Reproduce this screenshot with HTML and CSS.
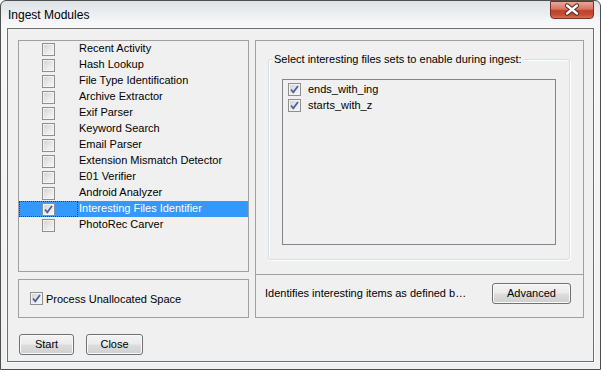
FILE: index.html
```html
<!DOCTYPE html>
<html lang="en">
<head>
    <meta charset="UTF-8">
    <title>Ingest Modules</title>
    <link rel="stylesheet" href="styles.css">
</head>
<body>
    <div class="window">
        <div class="titlebar">
            <span class="title">Ingest Modules</span>
            <span class="close-btn">
                <svg width="44" height="18" viewBox="0 0 44 18">
                    <path d="M17 4.5 L27 12.5 M27 4.5 L17 12.5" stroke="#4b2620" stroke-width="4.2" stroke-linecap="round" fill="none"/>
                    <path d="M17 4.5 L27 12.5 M27 4.5 L17 12.5" stroke="#ffffff" stroke-width="2.4" stroke-linecap="round" fill="none"/>
                </svg>
            </span>
        </div>

        <div class="client">
            <div class="panels">
                <!-- Lista de módulos -->
                <div class="left-col">
                    <div class="module-list">
                        <div class="row"><span class="cell-check"><span class="cb"></span></span><span class="cell-name">Recent Activity</span></div>
                        <div class="row"><span class="cell-check"><span class="cb"></span></span><span class="cell-name">Hash Lookup</span></div>
                        <div class="row"><span class="cell-check"><span class="cb"></span></span><span class="cell-name">File Type Identification</span></div>
                        <div class="row"><span class="cell-check"><span class="cb"></span></span><span class="cell-name">Archive Extractor</span></div>
                        <div class="row"><span class="cell-check"><span class="cb"></span></span><span class="cell-name">Exif Parser</span></div>
                        <div class="row"><span class="cell-check"><span class="cb"></span></span><span class="cell-name">Keyword Search</span></div>
                        <div class="row"><span class="cell-check"><span class="cb"></span></span><span class="cell-name">Email Parser</span></div>
                        <div class="row"><span class="cell-check"><span class="cb"></span></span><span class="cell-name">Extension Mismatch Detector</span></div>
                        <div class="row"><span class="cell-check"><span class="cb"></span></span><span class="cell-name">E01 Verifier</span></div>
                        <div class="row"><span class="cell-check"><span class="cb"></span></span><span class="cell-name">Android Analyzer</span></div>
                        <div class="row selected">
                            <span class="cell-check"><span class="cb">
                                <svg width="11" height="11" viewBox="0 0 11 11"><path d="M2 5.5 L4.3 8.3 L9 2" stroke="#4a5f97" stroke-width="1.7" fill="none"/></svg>
                            </span></span>
                            <span class="cell-name">Interesting Files Identifier</span>
                        </div>
                        <div class="row"><span class="cell-check"><span class="cb"></span></span><span class="cell-name">PhotoRec Carver</span></div>
                    </div>

                    <div class="unalloc">
                        <span class="cb">
                            <svg width="11" height="11" viewBox="0 0 11 11"><path d="M2 5.5 L4.3 8.3 L9 2" stroke="#4a5f97" stroke-width="1.7" fill="none"/></svg>
                        </span>
                        <span>Process Unallocated Space</span>
                    </div>
                </div>

                <!-- Ajustes del módulo -->
                <div class="settings">
                    <div class="settings-top">
                        <div class="group">
                            <span class="group-title">Select interesting files sets to enable during ingest:</span>
                            <div class="set-list">
                                <div class="set-row">
                                    <span class="cb"><svg width="11" height="11" viewBox="0 0 11 11"><path d="M2 5.5 L4.3 8.3 L9 2" stroke="#4a5f97" stroke-width="1.7" fill="none"/></svg></span>
                                    <span>ends_with_ing</span>
                                </div>
                                <div class="set-row">
                                    <span class="cb"><svg width="11" height="11" viewBox="0 0 11 11"><path d="M2 5.5 L4.3 8.3 L9 2" stroke="#4a5f97" stroke-width="1.7" fill="none"/></svg></span>
                                    <span>starts_with_z</span>
                                </div>
                            </div>
                        </div>
                    </div>
                    <div class="settings-bottom">
                        <span class="desc">Identifies interesting items as defined b…</span>
                        <button class="btn btn-advanced">Advanced</button>
                    </div>
                </div>
            </div>

            <div class="buttons">
                <button class="btn btn-start">Start</button>
                <button class="btn btn-close">Close</button>
            </div>
        </div>
    </div>
</body>
</html>
```

FILE: styles.css
```css
body {
    margin: 0;
    background: #ffffff;
    font-family: "Liberation Sans", Arial, sans-serif;
    font-size: 11px;
    color: #000;
}
.window {
    width: 601px;
    height: 370px;
    box-sizing: border-box;
    border: 1px solid #4f4f4f;
    border-radius: 6px 6px 0 0;
    padding: 0 6px 7px 6px;
    background: linear-gradient(to bottom, #dde2e6 0, #f6f7f9 22px, #eef0f2 100%);
    display: flex;
    flex-direction: column;
}
.titlebar {
    height: 27px;
    display: flex;
    justify-content: space-between;
    align-items: flex-start;
}
.title {
    font-size: 12px;
    margin: 7px 0 0 1px;
    line-height: 14px;
}
.close-btn {
    width: 44px;
    height: 18px;
    box-sizing: border-box;
    border: 1px solid #7a2f24;
    border-radius: 0 0 4px 4px;
    background: linear-gradient(to bottom, #eaa797 0%, #d87360 45%, #c1432c 52%, #c54b34 80%, #d97158 100%);
    display: flex;
    align-items: center;
    justify-content: center;
    overflow: hidden;
}
.close-btn svg {
    display: block;
    flex: none;
}
.client {
    flex: 1;
    border: 1px solid #6e6e6e;
    box-shadow: 0 0 0 1px #fbfbfb;
    background: #f0f0f0;
    padding: 11px 9px 0 10px;
}
.panels {
    display: grid;
    grid-template-columns: 231px 329px;
    column-gap: 6px;
    height: 278px;
}
.left-col {
    display: flex;
    flex-direction: column;
    gap: 7px;
}
.module-list {
    height: 232px;
    box-sizing: border-box;
    border: 1px solid #a0a0a0;
}
.row {
    display: flex;
    height: 16px;
    line-height: 15px;
}
.cell-check {
    width: 59px;
    box-sizing: border-box;
    display: flex;
    align-items: center;
    justify-content: center;
    border: 1px solid transparent;
}
.cell-name {
    flex: 1;
    padding-left: 1px;
    white-space: nowrap;
}
.row.selected .cell-check {
    background: #3399ff;
    border: 1px dotted #1d3f66;
}
.row.selected .cell-name {
    background: #3399ff;
    color: #fff;
}
.cb {
    width: 13px;
    height: 13px;
    box-sizing: border-box;
    flex: none;
    border: 1px solid #8e8f8f;
    background: linear-gradient(135deg, #cdd0d4 0%, #e6e7e8 50%, #f8f8f8 100%);
    box-shadow: inset 0 0 0 1px #f3f3f3;
    display: flex;
    align-items: center;
    justify-content: center;
}
.cb svg {
    display: block;
}
.unalloc {
    height: 39px;
    box-sizing: border-box;
    border: 1px solid #a0a0a0;
    display: flex;
    align-items: center;
    padding-left: 11px;
    gap: 3px;
}
.settings {
    border: 1px solid #a0a0a0;
    display: flex;
    flex-direction: column;
}
.settings-top {
    height: 234px;
    box-sizing: border-box;
    border-bottom: 1px solid #a0a0a0;
    display: flex;
    flex-direction: column;
    padding: 18px 13px 14px 12px;
}
.group {
    flex: 1;
    border: 1px solid #d5dfe5;
    border-radius: 3px;
    box-shadow: inset 1px 1px 0 #ffffff, 1px 1px 0 #ffffff;
    display: flex;
    flex-direction: column;
    align-items: flex-start;
    padding: 0 13px 14px 13px;
}
.group-title {
    line-height: 14px;
    margin: -8px 0 0 -10px;
    padding: 0 2px;
    background: #f0f0f0;
}
.set-list {
    align-self: stretch;
    flex: 1;
    margin-top: 13px;
    border: 1px solid #82868c;
    padding: 1px 0 0 5px;
}
.set-row {
    display: flex;
    align-items: center;
    height: 16px;
    gap: 7px;
}
.settings-bottom {
    flex: 1;
    display: flex;
    align-items: flex-start;
    justify-content: space-between;
    padding: 8px 12px 0 9px;
}
.desc {
    margin-top: 4px;
}
.btn {
    height: 21px;
    box-sizing: border-box;
    border: 1px solid #707070;
    border-radius: 3px;
    background: linear-gradient(to bottom, #f3f3f3 0%, #ebebeb 48%, #dddddd 52%, #cfcfcf 100%);
    box-shadow: inset 0 0 0 1px #fafafa;
    font-family: "Liberation Sans", Arial, sans-serif;
    font-size: 11px;
    color: #000;
    padding: 0 0 1px 0;
}
.btn-advanced {
    width: 79px;
}
.buttons {
    display: flex;
    gap: 12px;
    margin-top: 16px;
    padding-left: 1px;
}
.btn-start {
    width: 55px;
}
.btn-close {
    width: 57px;
}
```
